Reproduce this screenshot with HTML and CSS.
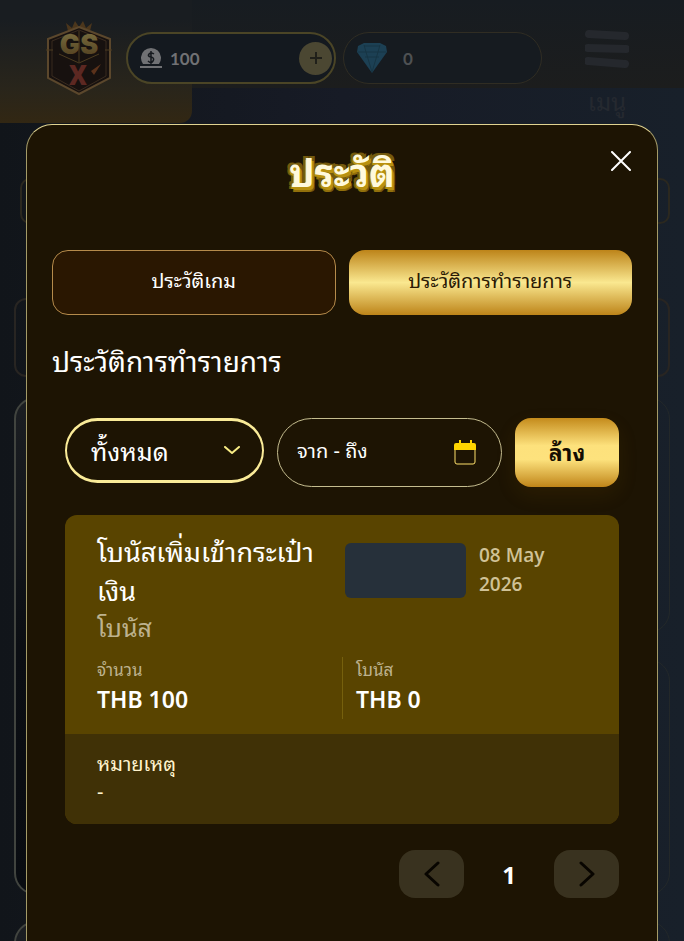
FILE: index.html
```html
<!DOCTYPE html>
<html lang="th">
<head>
	<meta charset="UTF-8">
	<meta name="viewport" content="width=device-width, initial-scale=1.0">
	<title>ประวัติ</title>
	<link rel="stylesheet" href="styles.css">
</head>
<body>
	<div class="page">
		<header class="topbar">
			<div class="brand">
				<svg class="logo" viewBox="0 0 68 80" aria-hidden="true">
					<defs>
						<linearGradient id="gold" x1="0" y1="0" x2="0" y2="1">
							<stop offset="0" stop-color="#7d7343"/>
							<stop offset="1" stop-color="#4e3a1c"/>
						</linearGradient>
					</defs>
					<path d="M23 13l-2-8 6 5 3-7 4 6 4-6 3 7 6-5-2 8z" fill="#4b361c"/>
					<path d="M34 9l31 12v39L34 76 3 60V21z" fill="#17110f" stroke="#5b472c" stroke-width="2"/>
					<path d="M34 12l27 11v35L34 73 7 58V23z" fill="none" stroke="#392b1f" stroke-width="1"/>
					<text class="logo-gs" x="34" y="36" text-anchor="middle" fill="url(#gold)">GS</text>
					<text class="logo-x" x="33" y="67" text-anchor="middle">X</text>
					<path d="M46 53l10-7-7 11" fill="#5b321b"/>
					<path d="M34 13v31M14 36l20 9 20-9M1 32h7M60 32h7" stroke="#4c3c20" fill="none"/>
				</svg>
			</div>
			<div class="wallet">
				<svg class="coin" viewBox="0 0 24 24" aria-hidden="true">
					<path d="M4 18a10 10 0 1 1 16 0z" fill="#707174"/>
					<path d="M1 21h22" stroke="#707174" stroke-width="2"/>
					<path d="M15 8q-3-2-5 0t2 3 2 4-5 0M12 5v13" fill="none" stroke="#15191e" stroke-width="1.5"/>
				</svg>
				<span>100</span>
				<button class="plus" type="button" aria-label="เติมเงิน">
					<svg viewBox="0 0 12 12" aria-hidden="true"><path d="M6 0v12M0 6h12" stroke="#20201a" stroke-width="2"/></svg>
				</button>
			</div>
			<div class="wallet gems">
				<svg class="gem" viewBox="0 0 30 32" aria-hidden="true">
					<path d="M7 1h16l6 3 1 6-15 21L0 10l1-6z" fill="#1c4054"/>
					<path d="M1 10h28M7 3l2 7 6 20 6-20 2-7M7 4h16M8 15h14" stroke="#173544" fill="none"/>
				</svg>
				<span>0</span>
			</div>
			<button class="menu" type="button">
				<svg viewBox="0 0 44 42" aria-hidden="true">
					<path d="M4 6l36 2M3 20l38 1M3 33l37 3" stroke="#25282d" stroke-width="8" stroke-linecap="round"/>
				</svg>
				<span>เมนู</span>
			</button>
		</header>
		<main class="lobby">
			<div class="ticker"></div>
			<div class="strip"></div>
			<div class="games">
				<div class="game tall"></div>
				<div class="game"></div>
				<div class="game"></div>
				<div class="game tall"></div>
				<div class="game"></div>
			</div>
		</main>
	</div>

	<div class="modal" role="dialog" aria-labelledby="modal-title">
		<div class="modal-head">
			<h1 id="modal-title">ประวัติ</h1>
			<button class="close" type="button" aria-label="ปิด">
				<svg viewBox="0 0 20 20" aria-hidden="true"><path d="M1 1l18 18M19 1L1 19" stroke="#fff" stroke-width="2" stroke-linecap="round"/></svg>
			</button>
		</div>

		<div class="tabs">
			<button class="tab" type="button">ประวัติเกม</button>
			<button class="tab active" type="button">ประวัติการทำรายการ</button>
		</div>

		<h2>ประวัติการทำรายการ</h2>

		<form class="filters">
			<div class="type">
				<select aria-label="ประเภท">
					<option>ทั้งหมด</option>
					<option>โบนัส</option>
				</select>
				<svg viewBox="0 0 16 9" aria-hidden="true"><path d="M1 1l7 6 7-6" fill="none" stroke="#f8ed85" stroke-width="2" stroke-linecap="round" stroke-linejoin="round"/></svg>
			</div>
			<div class="range">
				<input type="text" placeholder="จาก - ถึง" aria-label="จาก - ถึง" readonly>
				<svg viewBox="0 0 22 25" aria-hidden="true">
					<rect x="1" y="4" width="20" height="20" rx="2" fill="none" stroke="#ffe06a" stroke-width="1"/>
					<path d="M0 10V5q0-2 2-2h18q2 0 2 2v5zM5 0h2v4H5zM16 0h2v4h-2z" fill="#ffd500"/>
				</svg>
			</div>
			<button class="clear" type="reset">ล้าง</button>
		</form>

		<article class="record">
			<div class="record-main">
				<div class="record-top">
					<div class="record-name">
						<h3>โบนัสเพิ่มเข้ากระเป๋าเงิน</h3>
						<p>โบนัส</p>
					</div>
					<div class="masked"></div>
					<time datetime="2026-05-08">08 May 2026</time>
				</div>
				<dl class="amounts">
					<div><dt>จำนวน</dt><dd>THB 100</dd></div>
					<div><dt>โบนัส</dt><dd>THB 0</dd></div>
				</dl>
			</div>
			<div class="note">
				<p>หมายเหตุ</p>
				<p>-</p>
			</div>
		</article>

		<nav class="pager" aria-label="หน้า">
			<button type="button" aria-label="ก่อนหน้า">
				<svg viewBox="0 0 16 26" aria-hidden="true"><path d="M14 2L2 13l12 11"/></svg>
			</button>
			<span>1</span>
			<button type="button" aria-label="ถัดไป">
				<svg viewBox="0 0 16 26" aria-hidden="true"><path d="M2 2l12 11L2 24"/></svg>
			</button>
		</nav>
	</div>
</body>
</html>
```

FILE: styles.css
```css
*{margin: 0;padding: 0;box-sizing: border-box;}
body{height: 100vh;overflow: hidden;background: #151a22;color: #fff;font-family: "Noto Sans", "Noto Sans Thai Looped", "Noto Sans Thai", sans-serif;}
button,input,select{font: inherit;color: inherit;border: 0;background: none;outline: none;cursor: pointer;}
svg{display: block;flex: none;}

/* page behind the dialog */
.page{height: 100vh;overflow: hidden;background: linear-gradient(90deg, #11151a, #171b26 50%, #18202a);}
.topbar{display: flex;align-items: flex-start;height: 123px;background: linear-gradient(180deg, #171c21, #1c1d1d 88px, transparent 88px);}
.brand{width: 192px;height: 123px;margin-right: -66px;padding: 18px 0 0 45px;border-bottom-right-radius: 12px;background: linear-gradient(180deg, #191d21 20px, #29251b 88px, #322713);}
.logo{width: 68px;height: 80px;}
.logo-gs{font: 900 27px "Inter", sans-serif;}
.logo-x{font: 900 28px "Roboto", sans-serif;fill: #5c2822;}
.wallet{display: flex;align-items: center;gap: 7px;width: 210px;height: 52px;margin-top: 32px;padding: 0 2px 0 11px;border: 2px solid #4b4526;border-radius: 26px;background: #14191f;color: #717174;font: 700 17px "Lato", sans-serif;}
.coin{width: 24px;height: 24px;}
.plus{display: flex;align-items: center;justify-content: center;width: 33px;height: 33px;margin-left: auto;border-radius: 50%;background: #4b4732;}
.plus svg{width: 12px;height: 12px;}
.gems{width: 199px;margin-left: 7px;padding-left: 13px;gap: 16px;border: 1px solid #302d23;background: #161b20;color: #4e5153;}
.gem{width: 30px;height: 32px;}
.menu{display: flex;flex-direction: column;align-items: center;margin: 28px 55px 0 auto;font-size: 24px;line-height: 32px;color: #252930;}
.menu svg{width: 44px;height: 42px;margin-bottom: 16px;}
.lobby{padding: 55px 14px 0;}
.ticker{height: 46px;margin: 0 0 74px 6px;border: 2px solid #2b281f;border-radius: 10px;}
.strip{height: 79px;margin-bottom: 20px;border: 2px solid #282522;border-radius: 12px;}
.games{display: grid;grid-template-columns: 1fr 1fr;grid-auto-rows: 236px;gap: 26px 14px;}
.game{border: 1px solid #232829;border-radius: 22px;}
.tall{grid-row: span 2;border: 2px solid #41443f;background: linear-gradient(180deg, #1b1e22, #0b0e13 50%, #090c11);}

/* dialog */
.modal{position: fixed;top: 124px;right: 26px;bottom: 0;left: 26px;padding: 0 25px;border: 1px solid #a49b68;border-top-color: #e0d391;border-bottom: 0;border-radius: 26px 26px 0 0;background: #1d1403;overflow: hidden;}
.modal-head{display: grid;grid-template-columns: 1fr auto 1fr;align-items: start;height: 125px;padding-top: 24px;}
.modal-head h1{grid-column: 2;font-size: 38px;line-height: 46px;color: #fff9dc;text-shadow: -1px 2px #b8900f, 2px 3px #b8900f, -3px 2px #735a0d, 3px -2px #735a0d, -3px -2px #735a0d, 1px 5px #92700b, 3px 5px #735a0d;}
.close{justify-self: end;padding: 2px 1px;}
.close svg{width: 20px;height: 20px;}
.tabs{display: grid;grid-template-columns: 1fr 1fr;gap: 13px;}
.tab{height: 65px;padding-bottom: 8px;border: 1px solid #b58b4b;border-radius: 16px;background: #2a1701;font-size: 20px;}
.active{border: 0;background: linear-gradient(180deg, #bd8419, #fae890 50%, #bd8419);color: #2b1a05;}
h2{margin: 26px 0 37px;font-size: 28px;font-weight: 400;line-height: 40px;}
.filters{display: flex;align-items: flex-start;gap: 13px;margin: 0 13px;}
.type{display: grid;grid-template-columns: 1fr auto;align-items: center;width: 199px;height: 65px;padding: 0 22px 0 24px;border: 3px solid #faeb98;border-right-width: 2px;border-left-width: 2px;border-radius: 33px;}
.type select{grid-area: 1 / 1 / 2 / 3;width: 100%;height: 59px;appearance: none;font-size: 25px;}
.type svg{grid-area: 1 / 2;width: 16px;height: 9px;pointer-events: none;}
.type option{background: #1d1403;}
.range{display: flex;flex: 1;align-items: center;min-width: 0;height: 69px;padding: 0 25px 0 19px;border: 1px solid #c5bd8f;border-radius: 35px;}
.range input{flex: 1;min-width: 0;height: 60px;padding-bottom: 4px;font-size: 20px;}
.range input::placeholder{color: #fff;opacity: 1;}
.range svg{width: 22px;height: 25px;}
.clear{width: 104px;height: 69px;padding-bottom: 4px;border-radius: 16px;background: linear-gradient(180deg, #c48b1c, #fde17c 40%, #fde27d 60%, #c08519);box-shadow: 0 8px 20px rgba(150,100,0,.12);color: #140d02;font-size: 23px;font-weight: 700;}

.record{margin: 28px 13px 0;border-radius: 12px;overflow: hidden;background: #594400;}
.record-main{height: 219px;padding: 17px 32px 0;}
.record-top{display: flex;align-items: flex-start;}
.record-name{flex: 1;}
.record h3{font-size: 27px;font-weight: 400;line-height: 39px;}
.record-name p{font-size: 25px;line-height: 34px;color: #bdb28e;}
.masked{width: 121px;height: 55px;margin: 11px 13px 0 16px;border-radius: 6px;background: #26303a;}
.record time{width: 108px;margin-top: 9px;padding-right: 20px;font: 600 19px/29px "Open Sans", sans-serif;color: #d0c297;}
.amounts{display: grid;grid-template-columns: 1fr 1fr;margin-top: 13px;}
.amounts div{height: 62px;}
.amounts div + div{padding-left: 13px;border-left: 1px solid #76600d;}
.amounts dt{font-size: 17px;line-height: 26px;color: #bdb28e;}
.amounts dd{font: 600 23px/32px "Noto Sans", sans-serif;}
.note{height: 90px;padding: 16px 32px 0;background: #403106;font-size: 20px;line-height: 28px;color: #fff3cd;}
.pager{display: flex;align-items: center;justify-content: flex-end;margin: 26px 13px 0;}
.pager button{display: flex;align-items: center;justify-content: center;width: 65px;height: 48px;border-radius: 16px;background: #39321f;}
.pager svg{width: 16px;height: 26px;fill: none;stroke: #080500;stroke-width: 3;stroke-linecap: round;stroke-linejoin: round;}
.pager span{width: 90px;text-align: center;font-size: 24px;font-weight: 700;}
```
